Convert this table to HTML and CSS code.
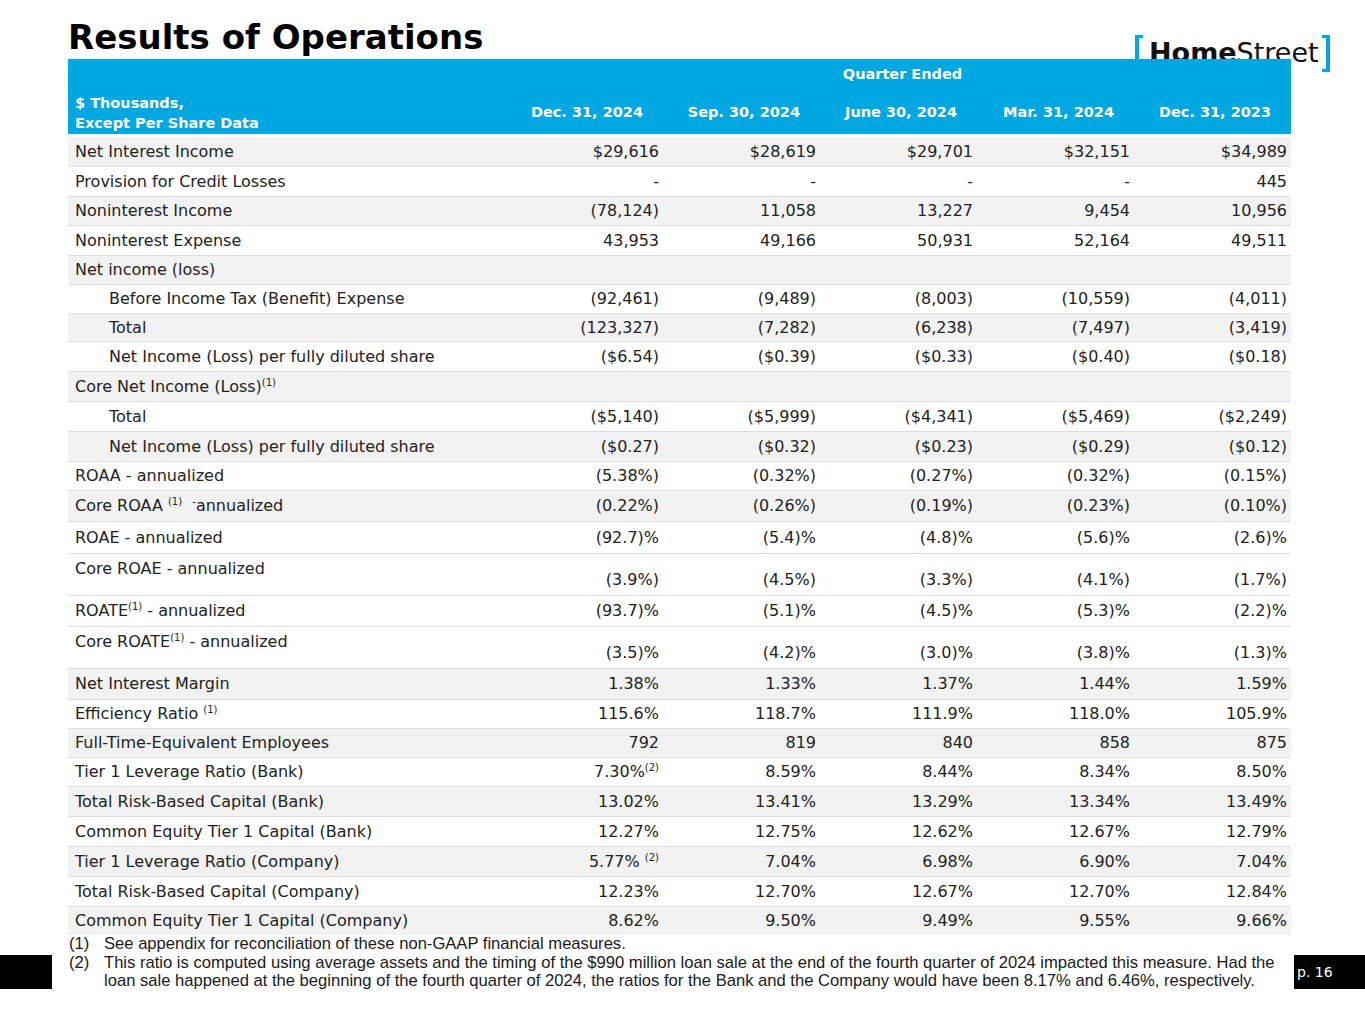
FILE: index.html
```html
<!DOCTYPE html>
<html lang="en">
<head>
<meta charset="utf-8">
<title>Results of Operations</title>
<link rel="stylesheet" href="styles.css">
</head>
<body>
<div class="slide">
  <header class="top">
    <h1 class="title">Results of Operations</h1>
    <div class="logo">
      <span class="br br-l"></span>
      <span class="logo-text"><b>Home</b>Street</span>
      <span class="br br-r"></span>
    </div>
  </header>

  <section class="tbl">
    <div class="thead">
      <div class="qe">Quarter Ended</div>
      <div class="hlabel">$ Thousands,<br>Except Per Share Data</div>
      <div class="hdate">Dec. 31, 2024</div>
      <div class="hdate">Sep. 30, 2024</div>
      <div class="hdate">June 30, 2024</div>
      <div class="hdate">Mar. 31, 2024</div>
      <div class="hdate">Dec. 31, 2023</div>
    </div>

    <div class="row gray"><div class="lab">Net Interest Income</div><div class="val">$29,616</div><div class="val">$28,619</div><div class="val">$29,701</div><div class="val">$32,151</div><div class="val">$34,989</div></div>
    <div class="row"><div class="lab">Provision for Credit Losses</div><div class="val">-</div><div class="val">-</div><div class="val">-</div><div class="val">-</div><div class="val">445</div></div>
    <div class="row gray h29"><div class="lab">Noninterest Income</div><div class="val">(78,124)</div><div class="val">11,058</div><div class="val">13,227</div><div class="val">9,454</div><div class="val">10,956</div></div>
    <div class="row"><div class="lab">Noninterest Expense</div><div class="val">43,953</div><div class="val">49,166</div><div class="val">50,931</div><div class="val">52,164</div><div class="val">49,511</div></div>
    <div class="row gray h29"><div class="lab">Net income (loss)</div><div class="val"></div><div class="val"></div><div class="val"></div><div class="val"></div><div class="val"></div></div>
    <div class="row h29"><div class="lab ind">Before Income Tax (Benefit) Expense</div><div class="val">(92,461)</div><div class="val">(9,489)</div><div class="val">(8,003)</div><div class="val">(10,559)</div><div class="val">(4,011)</div></div>
    <div class="row gray h28"><div class="lab ind">Total</div><div class="val">(123,327)</div><div class="val">(7,282)</div><div class="val">(6,238)</div><div class="val">(7,497)</div><div class="val">(3,419)</div></div>
    <div class="row"><div class="lab ind">Net Income (Loss) per fully diluted share</div><div class="val">($6.54)</div><div class="val">($0.39)</div><div class="val">($0.33)</div><div class="val">($0.40)</div><div class="val">($0.18)</div></div>
    <div class="row gray"><div class="lab">Core Net Income (Loss)<sup>(1)</sup></div><div class="val"></div><div class="val"></div><div class="val"></div><div class="val"></div><div class="val"></div></div>
    <div class="row"><div class="lab ind">Total</div><div class="val">($5,140)</div><div class="val">($5,999)</div><div class="val">($4,341)</div><div class="val">($5,469)</div><div class="val">($2,249)</div></div>
    <div class="row gray"><div class="lab ind">Net Income (Loss) per fully diluted share</div><div class="val">($0.27)</div><div class="val">($0.32)</div><div class="val">($0.23)</div><div class="val">($0.29)</div><div class="val">($0.12)</div></div>
    <div class="row h29"><div class="lab">ROAA - annualized</div><div class="val">(5.38%)</div><div class="val">(0.32%)</div><div class="val">(0.27%)</div><div class="val">(0.32%)</div><div class="val">(0.15%)</div></div>
    <div class="row gray h31"><div class="lab">Core ROAA <sup>(1)</sup>&nbsp; <sup>-</sup>annualized</div><div class="val">(0.22%)</div><div class="val">(0.26%)</div><div class="val">(0.19%)</div><div class="val">(0.23%)</div><div class="val">(0.10%)</div></div>
    <div class="row h32"><div class="lab">ROAE - annualized</div><div class="val">(92.7)%</div><div class="val">(5.4)%</div><div class="val">(4.8)%</div><div class="val">(5.6)%</div><div class="val">(2.6)%</div></div>
    <div class="row tall"><div class="lab">Core ROAE - annualized</div><div class="val">(3.9%)</div><div class="val">(4.5%)</div><div class="val">(3.3%)</div><div class="val">(4.1%)</div><div class="val">(1.7%)</div></div>
    <div class="row h31"><div class="lab">ROATE<sup>(1)</sup> - annualized</div><div class="val">(93.7)%</div><div class="val">(5.1)%</div><div class="val">(4.5)%</div><div class="val">(5.3)%</div><div class="val">(2.2)%</div></div>
    <div class="row tall"><div class="lab">Core ROATE<sup>(1)</sup> - annualized</div><div class="val">(3.5)%</div><div class="val">(4.2)%</div><div class="val">(3.0)%</div><div class="val">(3.8)%</div><div class="val">(1.3)%</div></div>
    <div class="row gray h31"><div class="lab">Net Interest Margin</div><div class="val">1.38%</div><div class="val">1.33%</div><div class="val">1.37%</div><div class="val">1.44%</div><div class="val">1.59%</div></div>
    <div class="row h29"><div class="lab">Efficiency Ratio <sup>(1)</sup></div><div class="val">115.6%</div><div class="val">118.7%</div><div class="val">111.9%</div><div class="val">118.0%</div><div class="val">105.9%</div></div>
    <div class="row gray h29"><div class="lab">Full-Time-Equivalent Employees</div><div class="val">792</div><div class="val">819</div><div class="val">840</div><div class="val">858</div><div class="val">875</div></div>
    <div class="row h29"><div class="lab">Tier 1 Leverage Ratio (Bank)</div><div class="val">7.30%<sup>(2)</sup></div><div class="val">8.59%</div><div class="val">8.44%</div><div class="val">8.34%</div><div class="val">8.50%</div></div>
    <div class="row gray"><div class="lab">Total Risk-Based Capital (Bank)</div><div class="val">13.02%</div><div class="val">13.41%</div><div class="val">13.29%</div><div class="val">13.34%</div><div class="val">13.49%</div></div>
    <div class="row"><div class="lab">Common Equity Tier 1 Capital (Bank)</div><div class="val">12.27%</div><div class="val">12.75%</div><div class="val">12.62%</div><div class="val">12.67%</div><div class="val">12.79%</div></div>
    <div class="row gray"><div class="lab">Tier 1 Leverage Ratio (Company)</div><div class="val">5.77% <sup>(2)</sup></div><div class="val">7.04%</div><div class="val">6.98%</div><div class="val">6.90%</div><div class="val">7.04%</div></div>
    <div class="row"><div class="lab">Total Risk-Based Capital (Company)</div><div class="val">12.23%</div><div class="val">12.70%</div><div class="val">12.67%</div><div class="val">12.70%</div><div class="val">12.84%</div></div>
    <div class="row gray h28 last"><div class="lab">Common Equity Tier 1 Capital (Company)</div><div class="val">8.62%</div><div class="val">9.50%</div><div class="val">9.49%</div><div class="val">9.55%</div><div class="val">9.66%</div></div>
  </section>

  <div class="notes">
    <span class="n">(1)</span><span class="t">See appendix for reconciliation of these non-GAAP financial measures.</span>
    <span class="n">(2)</span><span class="t">This ratio is computed using average assets and the timing of the $990 million loan sale at the end of the fourth quarter of 2024 impacted this measure. Had the<br>loan sale happened at the beginning of the fourth quarter of 2024, the ratios for the Bank and the Company would have been 8.17% and 6.46%, respectively.</span>
  </div>

  <div class="tab-left"></div>
  <div class="tab-page">p. 16</div>
</div>
</body>
</html>
```

FILE: styles.css
```css
* { box-sizing: border-box; }

html, body {
  margin: 0;
  padding: 0;
  background: #ffffff;
}

body {
  width: 1365px;
  height: 1024px;
  overflow: hidden;
  font-family: "DejaVu Sans", "Liberation Sans", sans-serif;
  color: #222222;
}

.slide {
  position: relative;
  width: 1365px;
  height: 1024px;
  padding-left: 68px;
}

/* ---------- title + logo ---------- */
.top {
  height: 59px;
}

.title {
  margin: 0;
  padding-top: 17px;
  font-size: 34px;
  line-height: 40px;
  font-weight: 700;
  letter-spacing: 0;
  color: #000000;
}

.logo {
  position: absolute;
  top: 35px;
  left: 1135px;
  display: flex;
  align-items: flex-start;
  z-index: 0;
}

.br {
  display: block;
  width: 8px;
  height: 37px;
  border: 0 solid #00a7e1;
  border-top-width: 3px;
  border-bottom-width: 3px;
}

.br-l { border-left-width: 4px; margin-right: 6px; }
.br-r { border-right-width: 4px; margin-left: 3px; }

.logo-text {
  margin-top: 4px;
  font-size: 27px;
  line-height: 27px;
  color: #111111;
  white-space: nowrap;
}

.logo-text b { font-weight: 700; }

/* ---------- table ---------- */
.tbl {
  position: relative;
  z-index: 1;
  width: 1223px;
  font-size: 16px;
  line-height: 20px;
}

.thead {
  display: grid;
  grid-template-columns: 438px repeat(5, 157px);
  grid-template-rows: 30px 45px;
  background: #00a7e1;
  color: #ffffff;
  font-weight: 700;
  font-size: 14.5px;
  line-height: 20px;
  margin-bottom: 3px;
}

.qe {
  grid-column: 2 / 7;
  grid-row: 1;
  align-self: center;
  text-align: center;
  padding-left: 8px;
}

.hlabel {
  grid-column: 1;
  grid-row: 2;
  align-self: center;
  padding: 3px 0 0 7px;
}

.hdate {
  grid-row: 2;
  align-self: center;
  text-align: right;
  padding-right: 20px;
  white-space: nowrap;
}

.row {
  display: grid;
  grid-template-columns: 438px repeat(5, 157px);
  align-items: center;
  height: 30px;
  border-bottom: 1px solid #dedede;
  background: #ffffff;
}

.row.gray { background: #f2f2f2; }
.row.h28 { height: 28px; }
.row.h29 { height: 29px; }
.row.h31 { height: 31px; }
.row.h32 { height: 32px; }
.row.last { border-bottom: none; }

.row.tall {
  height: 42px;
  align-items: stretch;
}

.row.tall .lab { align-self: start; padding-top: 5px; }
.row.tall .val { align-self: end; padding-bottom: 5px; }

.lab {
  padding-left: 7px;
  white-space: nowrap;
}

.lab.ind { padding-left: 41px; }

.val {
  text-align: right;
  padding-right: 4px;
  white-space: nowrap;
}

sup {
  font-size: 10px;
  line-height: 0;
  vertical-align: 6px;
}

/* ---------- footnotes ---------- */
.notes {
  display: grid;
  grid-template-columns: 35px auto;
  font-family: "Liberation Sans", Arial, sans-serif;
  font-size: 16.6px;
  line-height: 18.5px;
  color: #1a1a1a;
  padding-left: 1px;
  position: relative;
  z-index: 1;
}

.notes .t { white-space: nowrap; }

/* ---------- slide chrome ---------- */
.tab-left {
  position: absolute;
  left: 0;
  top: 955px;
  width: 52px;
  height: 34px;
  background: #000000;
}

.tab-page {
  position: absolute;
  left: 1294px;
  top: 955px;
  width: 71px;
  height: 34px;
  padding: 8px 0 0 3px;
  background: #000000;
  color: #ffffff;
  font-size: 14px;
  line-height: 18px;
}
```
